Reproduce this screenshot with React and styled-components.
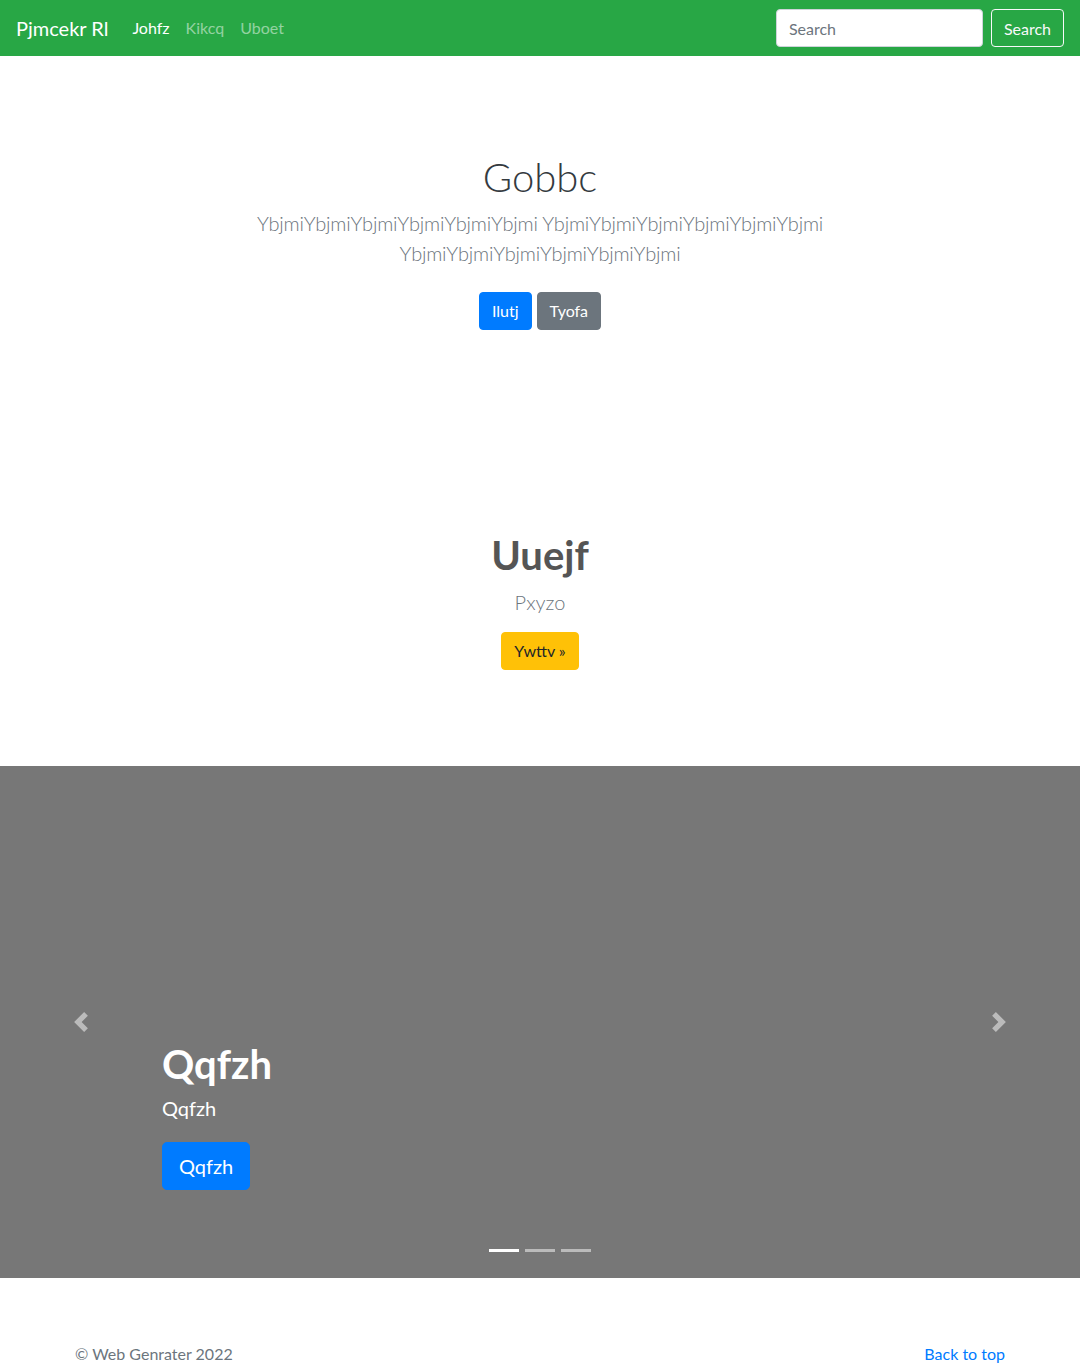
import React from 'react';
import styled, { createGlobalStyle } from 'styled-components';

const FONT = `"Segoe UI", Lato, "Open Sans", Arial, sans-serif`;

const GlobalStyle = createGlobalStyle`
  * {
    box-sizing: border-box;
  }

  body {
    margin: 0;
    font-family: ${FONT};
    font-size: 16px;
    line-height: 1.5;
    color: #212529;
    background: #fff;
  }
`;

const navLinks = [
  { label: 'Johfz', active: true },
  { label: 'Kikcq' },
  { label: 'Uboet' },
];

const slides = [{ id: 1 }, { id: 2 }, { id: 3 }];

const ChevronLeft = () => (
  <svg width="20" height="20" viewBox="0 0 8 8" fill="#fff">
    <path d="M5.25 0l-4 4 4 4 1.5-1.5L4.25 4l2.5-2.5L5.25 0z" />
  </svg>
);

const ChevronRight = () => (
  <svg width="20" height="20" viewBox="0 0 8 8" fill="#fff">
    <path d="M2.75 0l-1.5 1.5L3.75 4l-2.5 2.5L2.75 8l4-4-4-4z" />
  </svg>
);

const App = () => {
  return (
    <>
      <GlobalStyle />
      <Navbar>
        <Brand href="#">Pjmcekr Rl</Brand>
        <NavList>
          {navLinks.map((link) => (
            <NavLink key={link.label} href="#" $active={link.active}>
              {link.label}
            </NavLink>
          ))}
        </NavList>
        <SearchForm onSubmit={(e) => e.preventDefault()}>
          <SearchInput type="text" placeholder="Search" />
          <OutlineButton type="submit">Search</OutlineButton>
        </SearchForm>
      </Navbar>

      <Hero>
        <HeroTitle>Gobbc</HeroTitle>
        <Lead>
          YbjmiYbjmiYbjmiYbjmiYbjmiYbjmi YbjmiYbjmiYbjmiYbjmiYbjmiYbjmi
          YbjmiYbjmiYbjmiYbjmiYbjmiYbjmi
        </Lead>
        <ButtonRow>
          <Button $variant="primary">Ilutj</Button>
          <Button $variant="secondary">Tyofa</Button>
        </ButtonRow>
      </Hero>

      <Feature>
        <FeatureTitle>Uuejf</FeatureTitle>
        <FeatureText>Pxyzo</FeatureText>
        <Button $variant="warning">Ywttv »</Button>
      </Feature>

      <Carousel>
        <Caption>
          <CaptionTitle>Qqfzh</CaptionTitle>
          <CaptionText>Qqfzh</CaptionText>
          <Button $variant="primary" $large>
            Qqfzh
          </Button>
        </Caption>
        <Control $side="left" href="#">
          <ChevronLeft />
        </Control>
        <Control $side="right" href="#">
          <ChevronRight />
        </Control>
        <Indicators>
          {slides.map((s, i) => (
            <Indicator key={s.id} $active={i === 0} />
          ))}
        </Indicators>
      </Carousel>

      <Footer>
        <FooterInner>
          <FooterText>© Web Genrater 2022</FooterText>
          <FooterLink href="#">Back to top</FooterLink>
        </FooterInner>
      </Footer>
    </>
  );
};

const Navbar = styled.nav`
  height: 56px;
  padding: 0 16px;

  display: flex;
  align-items: center;

  background: #28a745;
`;

const Brand = styled.a`
  margin-right: 16px;

  font-size: 20px;
  line-height: 30px;
  color: #fff;
  text-decoration: none;
`;

const NavList = styled.div`
  display: flex;
  flex: 1;
`;

const NavLink = styled.a`
  padding: 8px;

  font-size: 16px;
  color: ${({ $active }) => ($active ? '#fff' : 'rgba(255, 255, 255, 0.5)')};
  text-decoration: none;
`;

const SearchForm = styled.form`
  display: flex;
  gap: 8px;
  align-items: center;
`;

const SearchInput = styled.input`
  width: 207px;
  height: 38px;
  padding: 6px 12px;

  font-family: ${FONT};
  font-size: 16px;
  color: #495057;

  background: #fff;
  border: 1px solid #ced4da;
  border-radius: 4px;
  outline: none;

  &::placeholder {
    color: #6c757d;
  }
`;

const OutlineButton = styled.button`
  height: 38px;
  padding: 6px 12px;

  font-family: ${FONT};
  font-size: 16px;
  color: #f8f9fa;

  background: transparent;
  border: 1px solid #f8f9fa;
  border-radius: 4px;
`;

const Hero = styled.section`
  padding: 97px 0 71px;

  display: flex;
  align-items: center;
  flex-direction: column;

  text-align: center;
`;

const HeroTitle = styled.h1`
  margin: 0 0 7px;

  font-size: 40px;
  font-weight: 300;
  line-height: 48px;
  color: #343a40;
`;

const Lead = styled.p`
  width: 610px;
  margin: 0 0 18px;

  font-size: 20px;
  font-weight: 300;
  line-height: 30px;
  letter-spacing: -0.2px;
  color: #6c757d;
`;

const ButtonRow = styled.div`
  margin: 6px 0;

  display: flex;
  gap: 5px;
`;

const variants = {
  primary: { bg: '#007bff', color: '#fff' },
  secondary: { bg: '#6c757d', color: '#fff' },
  warning: { bg: '#ffc107', color: '#212529' },
};

const Button = styled.a`
  display: inline-block;
  height: ${({ $large }) => ($large ? '48px' : '38px')};
  padding: ${({ $large }) => ($large ? '8px 16px' : '6px 12px')};

  font-size: ${({ $large }) => ($large ? '20px' : '16px')};
  line-height: ${({ $large }) => ($large ? '30px' : '24px')};
  color: ${({ $variant }) => variants[$variant].color};
  text-decoration: none;

  background: ${({ $variant }) => variants[$variant].bg};
  border: 1px solid ${({ $variant }) => variants[$variant].bg};
  border-radius: ${({ $large }) => ($large ? '5px' : '4px')};
  cursor: pointer;
`;

const Feature = styled.section`
  padding: 124px 0 96px;

  display: flex;
  align-items: center;
  flex-direction: column;

  text-align: center;
`;

const FeatureTitle = styled.h1`
  margin: 0 0 8px;

  font-size: 40px;
  font-weight: 700;
  line-height: 48px;
  color: #555;
`;

const FeatureText = styled.p`
  margin: 0 0 15px;

  font-size: 20px;
  font-weight: 300;
  line-height: 30px;
  color: #6c757d;
`;

const Carousel = styled.section`
  position: relative;
  height: 512px;
  padding: 0 15% 88px;

  display: flex;
  align-items: flex-start;
  flex-direction: column;
  justify-content: flex-end;

  background: #777;
`;

const Caption = styled.div`
  display: flex;
  align-items: flex-start;
  flex-direction: column;

  color: #fff;
`;

const CaptionTitle = styled.h1`
  margin: 0 0 8px;

  font-size: 40px;
  font-weight: 700;
  line-height: 48px;
`;

const CaptionText = styled.p`
  margin: 0 0 22px;

  font-size: 20px;
  line-height: 24px;
`;

const Control = styled.a`
  position: absolute;
  top: 0;
  bottom: 0;
  ${({ $side }) => $side}: 0;
  width: 15%;

  display: flex;
  align-items: center;
  justify-content: center;

  opacity: 0.5;
`;

const Indicators = styled.ol`
  position: absolute;
  left: 0;
  right: 0;
  bottom: 26px;
  margin: 0;
  padding: 0;

  display: flex;
  gap: 6px;
  justify-content: center;

  list-style: none;
`;

const Indicator = styled.li`
  width: 30px;
  height: 3px;

  background: #fff;
  opacity: ${({ $active }) => ($active ? 1 : 0.5)};
`;

const Footer = styled.footer`
  padding: 64px 0 0;
`;

const FooterInner = styled.div`
  width: 960px;
  margin: 0 auto;
  padding: 0 15px;

  display: flex;
  justify-content: space-between;
`;

const FooterText = styled.p`
  margin: 0;

  font-size: 16px;
  color: #6c757d;
`;

const FooterLink = styled.a`
  font-size: 16px;
  color: #007bff;
  text-decoration: none;
`;

export default App;
